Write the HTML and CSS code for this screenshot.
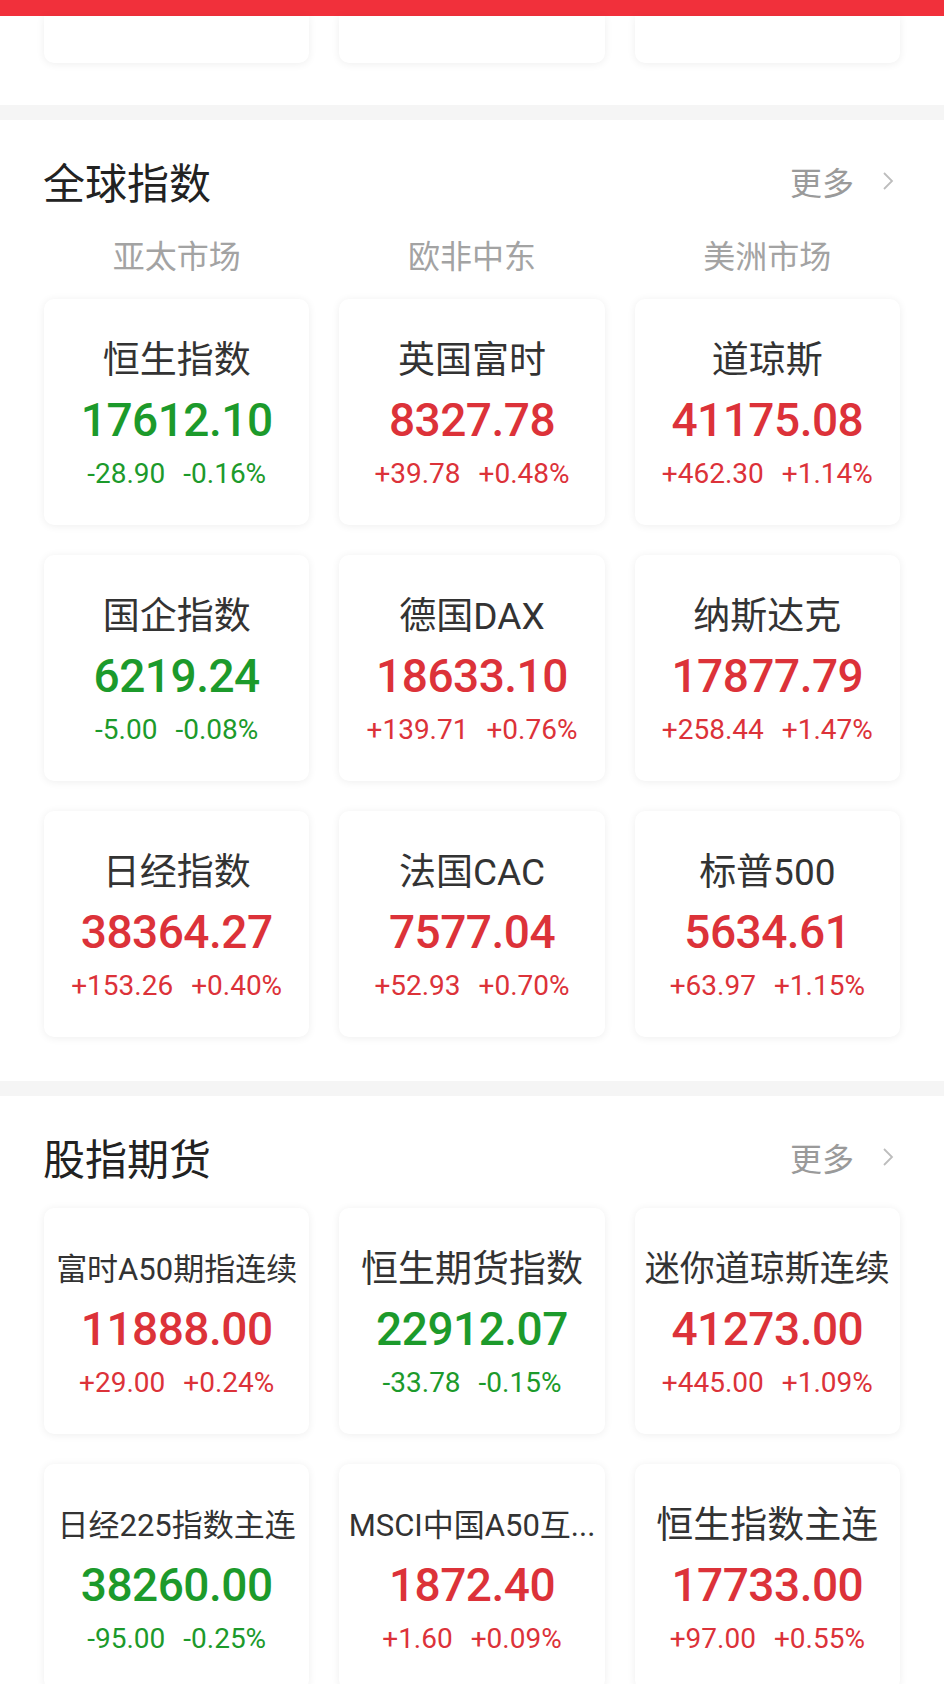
FILE: index.html
```html
<!DOCTYPE html>
<html lang="zh-CN">
<head>
  <meta charset="UTF-8" />
  <meta name="viewport" content="width=device-width, initial-scale=1.0"/>
  <title>全球指数</title>
  <link rel="stylesheet" href="styles.css">
</head>
<body>

  <div class="topbar"></div>

  <!-- previous block, scrolled under the bar -->
  <div class="prev">
    <div class="grid">
      <div class="card card-cut"></div>
      <div class="card card-cut"></div>
      <div class="card card-cut"></div>
    </div>
  </div>

  <section class="block">
    <div class="block-head">
      <h2>全球指数</h2>
      <a class="more" href="#">更多
        <svg width="16" height="22" viewBox="0 0 16 22"><polyline points="4,3 12,11 4,19" fill="none" stroke="#bdbdbd" stroke-width="1.8"/></svg>
      </a>
    </div>

    <div class="grid tabs">
      <span>亚太市场</span>
      <span>欧非中东</span>
      <span>美洲市场</span>
    </div>

    <div class="grid">
      <div class="card down">
        <div class="name">恒生指数</div>
        <div class="price">17612.10</div>
        <div class="change"><span>-28.90</span><span>-0.16%</span></div>
      </div>
      <div class="card up">
        <div class="name">英国富时</div>
        <div class="price">8327.78</div>
        <div class="change"><span>+39.78</span><span>+0.48%</span></div>
      </div>
      <div class="card up">
        <div class="name">道琼斯</div>
        <div class="price">41175.08</div>
        <div class="change"><span>+462.30</span><span>+1.14%</span></div>
      </div>

      <div class="card down">
        <div class="name">国企指数</div>
        <div class="price">6219.24</div>
        <div class="change"><span>-5.00</span><span>-0.08%</span></div>
      </div>
      <div class="card up">
        <div class="name">德国DAX</div>
        <div class="price">18633.10</div>
        <div class="change"><span>+139.71</span><span>+0.76%</span></div>
      </div>
      <div class="card up">
        <div class="name">纳斯达克</div>
        <div class="price">17877.79</div>
        <div class="change"><span>+258.44</span><span>+1.47%</span></div>
      </div>

      <div class="card up">
        <div class="name">日经指数</div>
        <div class="price">38364.27</div>
        <div class="change"><span>+153.26</span><span>+0.40%</span></div>
      </div>
      <div class="card up">
        <div class="name">法国CAC</div>
        <div class="price">7577.04</div>
        <div class="change"><span>+52.93</span><span>+0.70%</span></div>
      </div>
      <div class="card up">
        <div class="name">标普500</div>
        <div class="price">5634.61</div>
        <div class="change"><span>+63.97</span><span>+1.15%</span></div>
      </div>
    </div>
  </section>

  <section class="block">
    <div class="block-head">
      <h2>股指期货</h2>
      <a class="more" href="#">更多
        <svg width="16" height="22" viewBox="0 0 16 22"><polyline points="4,3 12,11 4,19" fill="none" stroke="#bdbdbd" stroke-width="1.8"/></svg>
      </a>
    </div>

    <div class="grid futures">
      <div class="card up">
        <div class="name name-sm">富时A50期指连续</div>
        <div class="price">11888.00</div>
        <div class="change"><span>+29.00</span><span>+0.24%</span></div>
      </div>
      <div class="card down">
        <div class="name">恒生期货指数</div>
        <div class="price">22912.07</div>
        <div class="change"><span>-33.78</span><span>-0.15%</span></div>
      </div>
      <div class="card up">
        <div class="name name-md">迷你道琼斯连续</div>
        <div class="price">41273.00</div>
        <div class="change"><span>+445.00</span><span>+1.09%</span></div>
      </div>

      <div class="card down">
        <div class="name name-sm">日经225指数主连</div>
        <div class="price">38260.00</div>
        <div class="change"><span>-95.00</span><span>-0.25%</span></div>
      </div>
      <div class="card up">
        <div class="name name-sm">MSCI中国A50互...</div>
        <div class="price">1872.40</div>
        <div class="change"><span>+1.60</span><span>+0.09%</span></div>
      </div>
      <div class="card up">
        <div class="name">恒生指数主连</div>
        <div class="price">17733.00</div>
        <div class="change"><span>+97.00</span><span>+0.55%</span></div>
      </div>
    </div>
  </section>

</body>
</html>
```

FILE: styles.css
```css
body {
  margin: 0;
  background: #fff;
  font-family: Roboto, "Noto Sans CJK SC", sans-serif;
  color: #333;
  overflow: hidden;
}

.topbar {
  height: 16px;
  background: #f1303b;
}

.grid {
  display: grid;
  grid-template-columns: repeat(3, 1fr);
  column-gap: 30px;
  row-gap: 30px;
  padding: 0 44px;
}

.prev {
  padding-bottom: 42px;
}

.card {
  background: #fff;
  border-radius: 10px;
  box-shadow: 0 1px 8px rgba(0, 0, 0, 0.07);
  height: 226px;
  box-sizing: border-box;
  padding: 40px 4px 0;
  display: flex;
  flex-direction: column;
  align-items: center;
  min-width: 0;
}

.card-cut {
  height: 47px;
  padding: 0;
  border-radius: 0 0 10px 10px;
}

.block {
  border-top: 15px solid #f5f5f5;
  padding-bottom: 44px;
}

.block-head {
  display: flex;
  align-items: center;
  justify-content: space-between;
  padding: 36px 48px 0 43px;
}

.block-head h2 {
  margin: 0;
  font-family: "Noto Sans CJK SC", sans-serif;
  font-size: 42px;
  line-height: 50px;
  font-weight: 400;
  color: #222;
}

.more {
  display: flex;
  align-items: center;
  gap: 26px;
  font-family: "Noto Sans CJK SC", sans-serif;
  font-size: 32px;
  color: #9a9a9a;
  text-decoration: none;
}

.tabs {
  margin: 28px 0 25px;
  text-align: center;
  font-family: "Noto Sans CJK SC", sans-serif;
  font-size: 32px;
  line-height: 40px;
  color: #a3a3a3;
}

.futures {
  margin-top: 26px;
}

.name {
  font-size: 37px;
  line-height: 44px;
  color: #333;
  white-space: nowrap;
  overflow: hidden;
  text-overflow: ellipsis;
  max-width: 100%;
}

.name-md {
  font-size: 35px;
}

.name-sm {
  font-size: 31px;
}

.price {
  margin-top: 9px;
  font-size: 46px;
  line-height: 56px;
  font-weight: 500;
  letter-spacing: -0.5px;
}

.change {
  margin-top: 9px;
  display: flex;
  gap: 18px;
  font-size: 28px;
  line-height: 34px;
}

.up {
  color: #dc3239;
}

.down {
  color: #1c9a2b;
}
```
